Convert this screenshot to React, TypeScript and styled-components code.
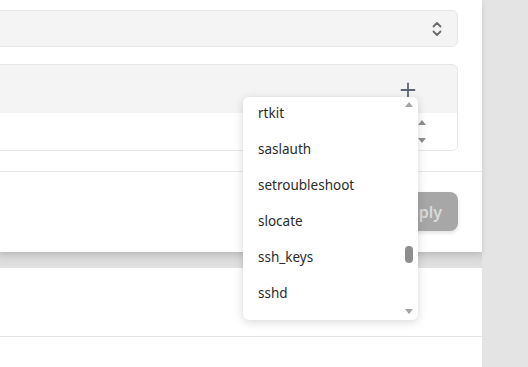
import React from 'react'
import styled, { createGlobalStyle } from 'styled-components'

const Global = createGlobalStyle`
  html, body {
    margin: 0;
    padding: 0;
    background: #ffffff;
    overflow: hidden;
  }
  body {
    font-family: "Noto Sans", "Open Sans", sans-serif;
  }
`

const items = ['rtkit', 'saslauth', 'setroubleshoot', 'slocate', 'ssh_keys', 'sshd']

function App() {
  return (
    <>
      <Global />
      <Page>
        <Main>
          <Card>
            <Form>
              <SelectBox>
                <ChevronIcon />
              </SelectBox>
              <MultiBox>
                <MultiHead>
                  <PlusIcon />
                </MultiHead>
                <ListArea>
                  <Arrow $dir="up" $tone="#8f8f8f" />
                  <Arrow $dir="down" $tone="#8f8f8f" />
                </ListArea>
              </MultiBox>
            </Form>
            <Divider />
            <Footer>
              <ApplyButton disabled>Apply</ApplyButton>
            </Footer>
          </Card>
          <Band />
          <Section />
        </Main>
        <Side />
        <Dropdown>
          <List>
            {items.map((name) => (
              <Item key={name}>{name}</Item>
            ))}
          </List>
          <Scrollbar>
            <Arrow $dir="up" $tone="#a3a3a3" />
            <Track>
              <Thumb />
            </Track>
            <Arrow $dir="down" $tone="#a3a3a3" />
          </Scrollbar>
        </Dropdown>
      </Page>
    </>
  )
}

export default App

function ChevronIcon() {
  return (
    <svg width="12" height="16" viewBox="0 0 12 16" fill="none">
      <path d="M2.5 5.5 L6 2 L9.5 5.5" stroke="#6a6a6a" strokeWidth="1.8" strokeLinecap="round" strokeLinejoin="round" />
      <path d="M2.5 10.5 L6 14 L9.5 10.5" stroke="#6a6a6a" strokeWidth="1.8" strokeLinecap="round" strokeLinejoin="round" />
    </svg>
  )
}

function PlusIcon() {
  return (
    <svg width="16" height="16" viewBox="0 0 16 16" fill="none">
      <path d="M8 1.5 V14.5 M1.5 8 H14.5" stroke="#5d6471" strokeWidth="1.8" strokeLinecap="round" />
    </svg>
  )
}

const Page = styled.div`
  position: relative;
  display: flex;
  width: 528px;
  height: 367px;
  overflow: hidden;
`
const Main = styled.div`
  width: 482px;
  display: flex;
  flex-direction: column;
`
const Side = styled.div`
  flex: 1;
  background: #e4e4e4;
`
const Card = styled.div`
  height: 252px;
  background: #ffffff;
  box-shadow: 0 2px 6px rgba(0, 0, 0, 0.12);
  position: relative;
  z-index: 1;
  display: flex;
  flex-direction: column;
`
const Form = styled.div`
  margin: 10px 24px 0 -16px;
  display: flex;
  flex-direction: column;
  gap: 17px;
`
const SelectBox = styled.div`
  height: 35px;
  background: #f4f4f4;
  border: 1px solid #e7e7e7;
  border-radius: 6px;
  display: flex;
  align-items: center;
  justify-content: flex-end;
  padding-right: 14px;
`
const MultiBox = styled.div`
  height: 85px;
  background: #f4f4f4;
  border: 1px solid #e7e7e7;
  border-radius: 6px;
  display: flex;
  flex-direction: column;
  overflow: hidden;
`
const MultiHead = styled.div`
  height: 48px;
  display: flex;
  align-items: flex-end;
  justify-content: flex-end;
  padding-right: 41px;
  box-sizing: border-box;
  padding-bottom: 15px;
`
const ListArea = styled.div`
  flex: 1;
  background: #ffffff;
  display: flex;
  flex-direction: column;
  align-items: flex-end;
  justify-content: space-between;
  padding: 7px 31px 7px 0;
`
const Divider = styled.div`
  margin-top: 20px;
  height: 1px;
  background: #e6e6e6;
`
const Footer = styled.div`
  display: flex;
  justify-content: flex-end;
  padding: 20px 24px 0 0;
`
const ApplyButton = styled.button`
  width: 76px;
  height: 39px;
  border: none;
  border-radius: 8px;
  background: #a7a7a7;
  color: #dadada;
  font-family: "Noto Sans", "Open Sans", sans-serif;
  font-size: 16px;
  font-weight: 600;
  padding: 0 16px 0 0;
  text-align: right;
  box-shadow: 0 2px 4px rgba(0, 0, 0, 0.12);
`
const Band = styled.div`
  height: 16px;
  background: linear-gradient(#d2d2d2, #e2e2e2);
`
const Section = styled.div`
  flex: 1;
  background: #ffffff;
  &::after {
    content: '';
    display: block;
    margin-top: 68px;
    height: 1px;
    background: #e4e4e4;
  }
`
const Dropdown = styled.div`
  position: absolute;
  left: 243px;
  top: 97px;
  width: 175px;
  height: 223px;
  background: #ffffff;
  border-radius: 6px;
  box-shadow: 0 2px 10px rgba(0, 0, 0, 0.16);
  overflow: hidden;
  z-index: 5;
`
const List = styled.div`
  margin-top: -2px;
  padding-left: 15px;
`
const Item = styled.div`
  height: 36px;
  line-height: 36px;
  font-size: 13.5px;
  color: #2b2b2b;
`
const Scrollbar = styled.div`
  position: absolute;
  right: 3px;
  top: 5px;
  bottom: 6px;
  width: 12px;
  display: flex;
  flex-direction: column;
  align-items: center;
`
const Track = styled.div`
  flex: 1;
  position: relative;
  width: 100%;
`
const Thumb = styled.div`
  position: absolute;
  left: 2px;
  top: 139px;
  width: 8px;
  height: 17px;
  border-radius: 4px;
  background: #8e8e8e;
`
const Arrow = styled.div<{ $dir: 'up' | 'down'; $tone: string }>`
  width: 0;
  height: 0;
  border-left: 4.5px solid transparent;
  border-right: 4.5px solid transparent;
  ${(p) =>
    p.$dir === 'up'
      ? `border-bottom: 5px solid ${p.$tone};`
      : `border-top: 5px solid ${p.$tone};`}
`
